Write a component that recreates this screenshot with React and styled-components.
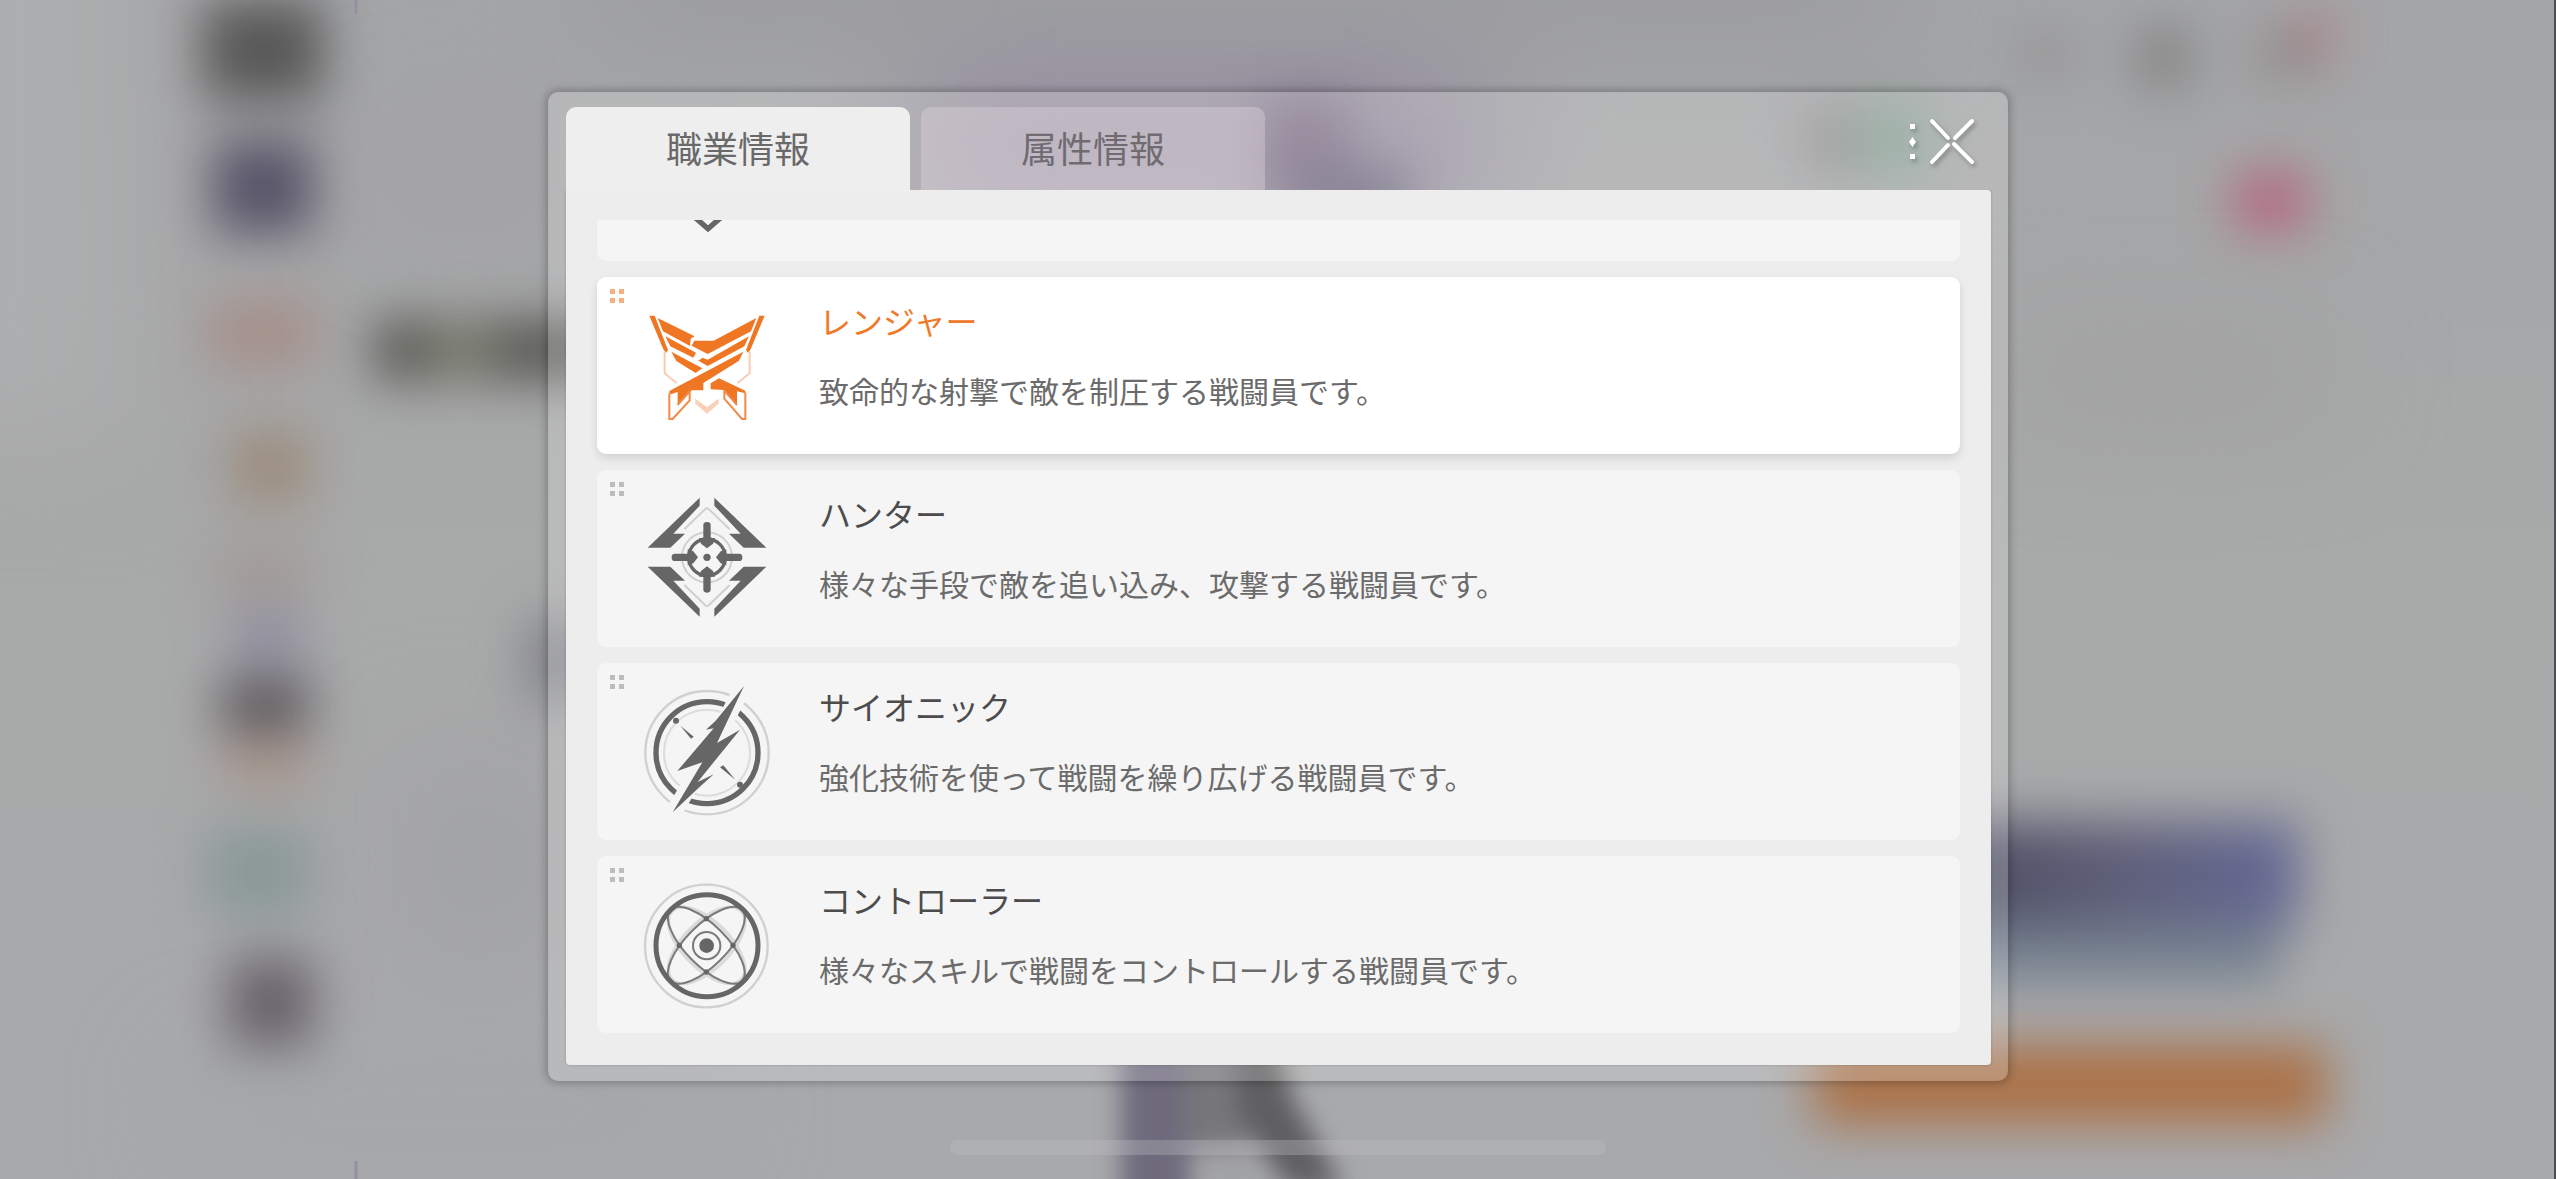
import React, { useState } from "react";
import styled, { createGlobalStyle } from "styled-components";

const GlobalStyle = createGlobalStyle`
  *, *::before, *::after { box-sizing: border-box; }
  body {
    margin: 0;
    background: #a6a8a9;
    font-family: "Noto Sans CJK JP", "Noto Sans", sans-serif;
  }
  button { font-family: inherit; }
`;

const Screen = styled.div`
  position: relative;
  display: flex;
  flex-direction: column;
  align-items: center;
  min-height: 100vh;
  padding: 92px 0 24px;
  overflow: hidden;
  isolation: isolate;
`;

const Scene = styled.svg`
  position: absolute;
  inset: 0;
  width: 100%;
  height: 100%;
  z-index: -1;
  border-right: 2px solid #4b4d50;
`;

const Dialog = styled.section`
  display: flex;
  flex-direction: column;
  width: calc(100% - 1096px);
  min-width: 900px;
  padding: 14px 16px 15px 17px;
  border: 1px solid rgba(255, 255, 255, 0.18);
  border-radius: 10px;
  background: rgba(255, 255, 255, 0.2);
  box-shadow: 0 0 8px 2px rgba(0, 0, 0, 0.25);
  background-clip: padding-box;
`;

const Header = styled.header`
  display: flex;
  align-items: flex-start;
  justify-content: space-between;
`;

const Tabs = styled.div`
  display: flex;
  gap: 11px;
`;

const Tab = styled.button`
  width: 344px;
  height: 83px;
  padding: 0 0 4px;
  border: 0;
  border-radius: 10px 10px 0 0;
  background: ${(p) => (p.$active ? "#eeeeee" : "rgba(222, 212, 220, 0.4)")};
  color: ${(p) => (p.$active ? "#696969" : "#6f6b71")};
  font-size: 36px;
  line-height: 52px;
  cursor: pointer;
`;

const CloseButton = styled.button`
  display: flex;
  margin: 8px 14px 0 0;
  padding: 0;
  border: 0;
  background: none;
  cursor: pointer;
  filter: drop-shadow(2px 3px 2px rgba(0, 0, 0, 0.25));
`;

const Panel = styled.div`
  padding: 30px 10px 32px;
  border-radius: 0 4px 4px 4px;
  background: #ededed;
  box-shadow: 0 0 3px rgba(0, 0, 0, 0.2);
  clip-path: inset(0 -4px -4px -4px);
`;

const List = styled.ul`
  display: flex;
  flex-direction: column;
  justify-content: flex-end;
  gap: 16px;
  height: calc(100vh - 366px);
  margin: 0;
  padding: 0 21px;
  overflow: hidden;
  list-style: none;
`;

const Card = styled.li`
  display: flex;
  flex: none;
  align-items: center;
  height: 177px;
  padding: 12px 13px;
  border-radius: 9px;
  background: ${(p) => (p.$active ? "#ffffff" : "#f5f5f5")};
  box-shadow: ${(p) => (p.$active ? "0 4px 8px rgba(0, 0, 0, 0.12)" : "none")};
`;

const Grip = styled.span`
  display: grid;
  grid-template-columns: 5px 5px;
  grid-auto-rows: 5px;
  gap: 4px;
  align-self: flex-start;
  width: 14px;
  margin-right: 17px;
  color: ${(p) => (p.$active ? "#f2b083" : "#bdbdbd")};

  i { background: currentColor; }
`;

const Emblem = styled.svg`
  flex: none;
  width: 132px;
  height: 132px;
  margin-right: 46px;
`;

const Copy = styled.div`
  display: flex;
  flex-direction: column;
  gap: 24px;
  padding-bottom: 22px;
`;

const Name = styled.h2`
  margin: 0;
  color: ${(p) => (p.$active ? "#ef7a2c" : "#4c4c4c")};
  font-size: 32px;
  font-weight: 400;
  line-height: 46px;
`;

const Description = styled.p`
  margin: 0;
  color: #6b6b6b;
  font-size: 30px;
  line-height: 46px;
`;

const HomeBar = styled.div`
  width: 656px;
  height: 15px;
  margin-top: auto;
  border-radius: 8px;
  background: rgba(190, 190, 196, 0.34);
`;

const DARK = "#666666";
const PALE = "#d0d0d0";
const ORANGE = "#ef7622";
const CARD = "#f5f5f5";

function FirstEmblem() {
  return (
    <Emblem viewBox="0 0 396 396" aria-hidden="true">
      <path d="M101 279L201 365L301 279" fill="none" stroke={DARK} strokeWidth="16" />
    </Emblem>
  );
}

function RangerEmblem() {
  return (
    <Emblem viewBox="152 88 396 396" aria-hidden="true">
      <g fill={ORANGE}>
        <path d="M177 135H193L233 238L228 246L220 238Z" />
        <path d="M523 135H507L467 238L472 246L480 238Z" />
        <path d="M202 142L313 197L301 204L299 226L218 182Z" />
        <path d="M225 197L317 246L309 261L240 227Z" />
        <path d="M243 243L336 293L316 307L258 271Z" />
        <path d="M498 142L482 182L352 250L304 225L312 210H370Z" />
        <path d="M476 197L462 227L352 286L324 270L337 261L352 267Z" />
        <path d="M459 243L446 270L339 337V359H305L262 403V364L242 371L237 366V361Z" />
        <path d="M386 323L465 360V368L440 362V403L402 358L361 356V338Z" />
      </g>
      <g fill="none" stroke="#f08a4a" strokeWidth="6">
        <path d="M237 368V445H247L298 389V362L262 403" />
        <path d="M465 366V445H455L402 384V360L440 403" />
      </g>
      <g fill="none" stroke="#f8cdb2" strokeWidth="6">
        <path d="M223 243V308L259 338" />
        <path d="M478 243V308L441 338" />
      </g>
      <path d="M315 384L350 409L385 384V399L350 429L315 399Z" fill="#f9d0b8" />
    </Emblem>
  );
}

function HunterEmblem() {
  const wing = "M328 96V120L249 204H284L240 246H172Z";
  return (
    <Emblem viewBox="152 82 396 396" aria-hidden="true">
      <g fill="none" stroke={PALE} strokeWidth="6">
        <path d="M282 191L344 131Q350 125 356 131L418 191" />
        <path d="M282 358L344 418Q350 424 356 418L418 358" />
        <circle cx="350" cy="275" r="75" />
      </g>
      <g fill={DARK}>
        <path d={wing} />
        <path d={wing} transform="matrix(-1 0 0 1 700 0)" />
        <path d={wing} transform="matrix(1 0 0 -1 0 549)" />
        <path d={wing} transform="matrix(-1 0 0 -1 700 549)" />
        <circle cx="350" cy="275" r="11" />
      </g>
      <circle cx="350" cy="275" r="55" fill="none" stroke={DARK} strokeWidth="10" />
      {[0, 90, 180, 270].map((a) => (
        <g key={a} transform={`rotate(${a} 350 275)`} fill={DARK}>
          <rect x="339" y="169" width="22" height="66" rx="10" />
          <path d="M326 217H374L368 234L350 248L332 234Z" />
        </g>
      ))}
    </Emblem>
  );
}

function PsionicEmblem() {
  return (
    <Emblem viewBox="152 76 396 396" aria-hidden="true">
      <g fill="none">
        <circle cx="350" cy="276" r="185" stroke={PALE} strokeWidth="7" />
        <circle cx="350" cy="276" r="153" stroke={DARK} strokeWidth="16" />
        <circle cx="350" cy="276" r="129" stroke="#dcdcdc" strokeWidth="6" />
        <path d="M456 83L390 210M246 462L318 340" stroke={CARD} strokeWidth="50" />
      </g>
      <g fill={DARK}>
        <path d="M461 76L380 247L449 207L322 364L370 341L322 384L247 455L336 305L261 331L370 203L347 207L376 180Z" />
        <circle cx="257" cy="180" r="9" />
        <circle cx="449" cy="372" r="9" />
        <path d="M270 195L310 228L302 234Z" />
        <path d="M389 320L399 314L435 357Z" />
      </g>
    </Emblem>
  );
}

function ControllerEmblem() {
  return (
    <Emblem viewBox="152 85 396 396" aria-hidden="true">
      <g fill="none">
        <circle cx="348" cy="286" r="184" stroke={PALE} strokeWidth="7" />
        <g stroke="#dadada" strokeWidth="10">
          <ellipse cx="349" cy="284" rx="146" ry="70" transform="rotate(45 349 284)" />
          <ellipse cx="349" cy="284" rx="146" ry="70" transform="rotate(-45 349 284)" />
        </g>
        <g stroke="#7a7a7a" strokeWidth="6">
          <ellipse cx="348" cy="284" rx="151" ry="61" transform="rotate(45 348 284)" />
          <ellipse cx="348" cy="284" rx="151" ry="61" transform="rotate(-45 348 284)" />
          <circle cx="349" cy="285" r="41" />
        </g>
        <circle cx="350" cy="285" r="153" stroke={DARK} strokeWidth="15" />
      </g>
      <g fill={DARK}>
        <circle cx="349" cy="285" r="22" />
        <circle cx="348" cy="204" r="8" />
        <circle cx="348" cy="364" r="8" />
        <circle cx="267" cy="284" r="8" />
        <circle cx="428" cy="284" r="8" />
      </g>
    </Emblem>
  );
}

function BlurredScene() {
  return (
    <Scene viewBox="0 0 2556 1179" preserveAspectRatio="xMidYMid slice" aria-hidden="true">
      <defs>
        <linearGradient id="base" x1="0" y1="0" x2="0" y2="1">
          <stop offset="0" stopColor="#a4a5a7" />
          <stop offset="0.5" stopColor="#a8a9a9" />
          <stop offset="1" stopColor="#a8a9ab" />
        </linearGradient>
        <linearGradient id="banner" x1="0" y1="0" x2="1" y2="0">
          <stop offset="0" stopColor="#4c4d60" />
          <stop offset="0.5" stopColor="#5f5f79" />
          <stop offset="1" stopColor="#656a96" />
        </linearGradient>
        <filter id="soft" x="-100%" y="-100%" width="300%" height="300%" colorInterpolationFilters="sRGB">
          <feGaussianBlur stdDeviation="25" />
        </filter>
        <filter id="wide" x="-100%" y="-100%" width="300%" height="300%" colorInterpolationFilters="sRGB">
          <feGaussianBlur stdDeviation="60" />
        </filter>
        <filter id="tight" x="-50%" y="-50%" width="200%" height="200%" colorInterpolationFilters="sRGB">
          <feGaussianBlur stdDeviation="12" />
        </filter>
      </defs>
      <rect width="2556" height="1179" fill="url(#base)" />
      <g filter="url(#wide)">
        <rect x="-160" y="-160" width="300" height="600" fill="#adaeaf" />
        <rect x="390" y="130" width="150" height="80" fill="#a09fa4" />
        <rect x="400" y="760" width="160" height="200" fill="#a1a2a5" />
        <rect x="920" y="80" width="560" height="140" fill="#93899f" />
        <rect x="600" y="-60" width="1300" height="90" fill="#98999c" />
        <rect x="2010" y="350" width="310" height="60" fill="#9e9e9e" />
        <rect x="200" y="1080" width="500" height="60" fill="#a1a6a9" />
      </g>
      <g filter="url(#soft)">
        <rect x="204" y="0" width="120" height="100" fill="#585858" />
        <rect x="214" y="140" width="100" height="94" fill="#585468" />
        <rect x="210" y="300" width="106" height="66" fill="#a58f89" />
        <rect x="232" y="430" width="78" height="74" fill="#9c8c7d" />
        <rect x="216" y="550" width="96" height="50" fill="#a09896" />
        <rect x="236" y="614" width="66" height="50" fill="#8c8b9f" />
        <rect x="222" y="680" width="88" height="50" fill="#575257" />
        <rect x="224" y="742" width="86" height="42" fill="#a69084" />
        <rect x="208" y="828" width="102" height="88" fill="#8a9898" />
        <rect x="230" y="958" width="84" height="88" fill="#67616a" />
        <rect x="375" y="320" width="240" height="60" fill="#575853" />
        <rect x="430" y="326" width="64" height="48" fill="#7c7e6e" />
        <rect x="530" y="620" width="60" height="80" fill="#7f8088" />
        <rect x="1262" y="100" width="90" height="110" fill="#7f7086" />
        <rect x="1300" y="170" width="110" height="50" fill="#656177" />
        <rect x="1812" y="110" width="46" height="60" fill="#868686" />
        <rect x="1862" y="104" width="66" height="70" fill="#84a193" />
        <rect x="2020" y="36" width="56" height="36" fill="#929292" />
        <rect x="2138" y="28" width="54" height="60" fill="#848484" />
        <rect x="2258" y="30" width="64" height="46" fill="#8f8b8c" />
        <circle cx="2316" cy="34" r="20" fill="#b27a82" />
        <rect x="2236" y="172" width="72" height="58" fill="#b4677e" />
        <rect x="1940" y="822" width="360" height="104" fill="url(#banner)" />
        <rect x="1940" y="926" width="340" height="56" fill="#75818f" />
        <rect x="1816" y="1046" width="512" height="78" fill="#ab7045" />
      </g>
      <g filter="url(#tight)">
        <rect x="1122" y="1030" width="70" height="190" fill="#6e6a7c" />
        <rect x="1186" y="1030" width="60" height="120" fill="#77767a" />
        <path d="M1235 1040H1275L1295 1100L1345 1190H1290L1240 1120Z" fill="#5f5f61" />
        <path d="M1204 1190L1228 1140L1270 1190Z" fill="#a0a1a2" />
      </g>
      <path d="M357 0V14M357 1161V1179" stroke="#958fa3" strokeWidth="3" />
    </Scene>
  );
}

const CLASSES = [
  {
    id: "ranger",
    name: "レンジャー",
    description: "致命的な射撃で敵を制圧する戦闘員です。",
    icon: RangerEmblem,
    active: true,
  },
  {
    id: "hunter",
    name: "ハンター",
    description: "様々な手段で敵を追い込み、攻撃する戦闘員です。",
    icon: HunterEmblem,
  },
  {
    id: "psionic",
    name: "サイオニック",
    description: "強化技術を使って戦闘を繰り広げる戦闘員です。",
    icon: PsionicEmblem,
  },
  {
    id: "controller",
    name: "コントローラー",
    description: "様々なスキルで戦闘をコントロールする戦闘員です。",
    icon: ControllerEmblem,
  },
];

const TABS = ["職業情報", "属性情報"];

function GripDots({ active }) {
  return (
    <Grip $active={active} aria-hidden="true">
      <i />
      <i />
      <i />
      <i />
    </Grip>
  );
}

function ClassCard({ item }) {
  const Icon = item.icon;
  return (
    <Card $active={item.active}>
      <GripDots active={item.active} />
      <Icon />
      <Copy>
        <Name $active={item.active}>{item.name}</Name>
        <Description>{item.description}</Description>
      </Copy>
    </Card>
  );
}

export default function App() {
  const [tab, setTab] = useState(0);
  return (
    <>
      <GlobalStyle />
      <Screen>
        <BlurredScene />
        <Dialog role="dialog">
          <Header>
            <Tabs role="tablist">
              {TABS.map((label, i) => (
                <Tab
                  key={label}
                  type="button"
                  role="tab"
                  aria-selected={tab === i}
                  $active={tab === i}
                  onClick={() => setTab(i)}
                >
                  {label}
                </Tab>
              ))}
            </Tabs>
            <CloseButton type="button">
              <svg width="72" height="54" viewBox="0 0 72 54" aria-hidden="true">
                <path d="M5 9H10V14H5ZM7.500 22L11 27L7.500 32L4 27ZM5 39H10V44H5Z" fill="#fff" />
                <path
                  d="M27 6L43 23M49 29L67 47M67 6L50 23M43 30L27 47"
                  stroke="#fff"
                  strokeWidth="4"
                  strokeLinecap="round"
                />
              </svg>
            </CloseButton>
          </Header>
          <Panel>
            <List>
              <Card>
                <GripDots />
                <FirstEmblem />
              </Card>
              {CLASSES.map((item) => (
                <ClassCard key={item.id} item={item} />
              ))}
            </List>
          </Panel>
        </Dialog>
        <HomeBar />
      </Screen>
    </>
  );
}
